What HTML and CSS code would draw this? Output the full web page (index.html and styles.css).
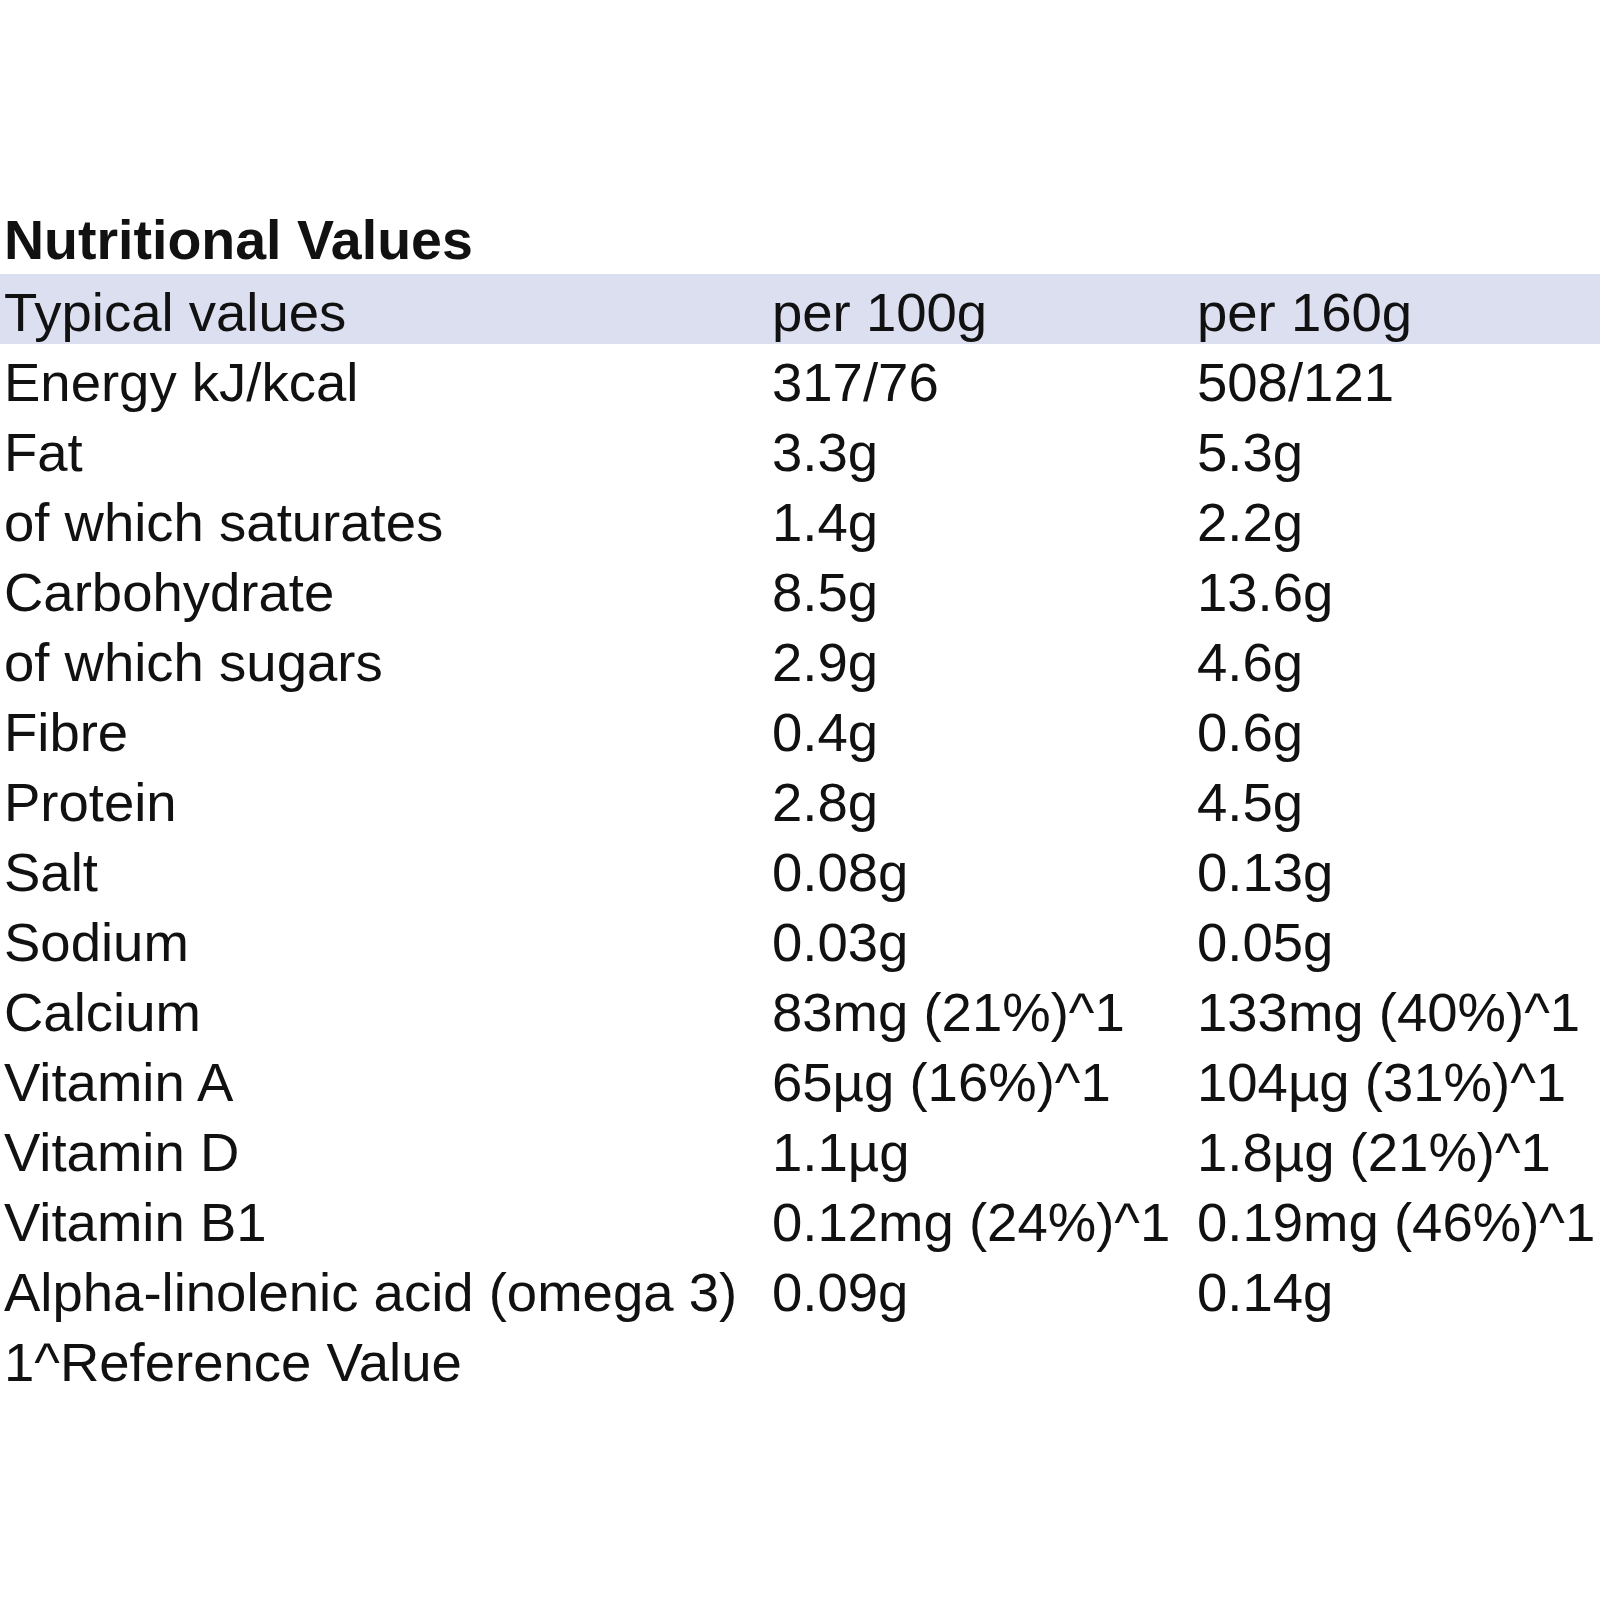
FILE: index.html
```html
<!DOCTYPE html>
<html lang="en">
<head>
<meta charset="utf-8">
<title>Nutritional Values</title>
<link rel="stylesheet" href="styles.css">
</head>
<body>
<div class="panel">
  <div class="title">Nutritional Values</div>
  <div class="table">
    <div class="row head"><div class="cell">Typical values</div><div class="cell">per 100g</div><div class="cell">per 160g</div></div>
    <div class="row"><div class="cell">Energy kJ/kcal</div><div class="cell">317/76</div><div class="cell">508/121</div></div>
    <div class="row"><div class="cell">Fat</div><div class="cell">3.3g</div><div class="cell">5.3g</div></div>
    <div class="row"><div class="cell">of which saturates</div><div class="cell">1.4g</div><div class="cell">2.2g</div></div>
    <div class="row"><div class="cell">Carbohydrate</div><div class="cell">8.5g</div><div class="cell">13.6g</div></div>
    <div class="row"><div class="cell">of which sugars</div><div class="cell">2.9g</div><div class="cell">4.6g</div></div>
    <div class="row"><div class="cell">Fibre</div><div class="cell">0.4g</div><div class="cell">0.6g</div></div>
    <div class="row"><div class="cell">Protein</div><div class="cell">2.8g</div><div class="cell">4.5g</div></div>
    <div class="row"><div class="cell">Salt</div><div class="cell">0.08g</div><div class="cell">0.13g</div></div>
    <div class="row"><div class="cell">Sodium</div><div class="cell">0.03g</div><div class="cell">0.05g</div></div>
    <div class="row"><div class="cell">Calcium</div><div class="cell">83mg (21%)^1</div><div class="cell">133mg (40%)^1</div></div>
    <div class="row"><div class="cell">Vitamin A</div><div class="cell">65µg (16%)^1</div><div class="cell">104µg (31%)^1</div></div>
    <div class="row"><div class="cell">Vitamin D</div><div class="cell">1.1µg</div><div class="cell">1.8µg (21%)^1</div></div>
    <div class="row"><div class="cell">Vitamin B1</div><div class="cell">0.12mg (24%)^1</div><div class="cell">0.19mg (46%)^1</div></div>
    <div class="row"><div class="cell">Alpha-linolenic acid (omega 3)</div><div class="cell">0.09g</div><div class="cell">0.14g</div></div>
    <div class="row"><div class="cell">1^Reference Value</div><div class="cell"></div><div class="cell"></div></div>
  </div>
</div>
</body>
</html>
```

FILE: styles.css
```css
html, body {
  margin: 0;
  padding: 0;
  background: #ffffff;
}

body {
  width: 1600px;
  height: 1600px;
  font-family: "Liberation Sans", Arial, sans-serif;
  font-size: 54.5px;
  color: #111111;
}

.panel {
  padding-top: 203px;
}

.title {
  font-weight: bold;
  font-size: 55.5px;
  padding: 5px 0 0 4px;
  line-height: 65.8px;
  height: 65.8px;
  white-space: nowrap;
}

.table {
  display: flex;
  flex-direction: column;
}

.row {
  display: grid;
  grid-template-columns: 768px 425px 1fr;
  height: 70px;
}

.row.head {
  background: #dcdff0;
}

.cell {
  padding: 7px 0 0 4px;
  line-height: 63px;
  white-space: nowrap;
}
```
